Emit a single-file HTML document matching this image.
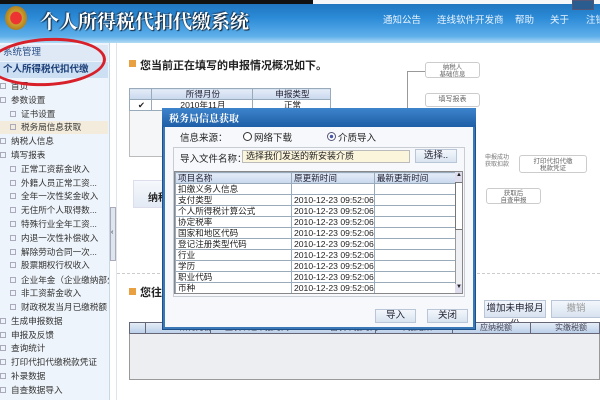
<!DOCTYPE html>
<html><head><meta charset="utf-8"><style>
*{margin:0;padding:0;box-sizing:border-box}
body{width:600px;height:400px;overflow:hidden;position:relative;background:#fff;font-family:"Liberation Sans","Noto Sans CJK SC",sans-serif;font-size:10px;color:#222}
.a{position:absolute;white-space:nowrap}
.hdr{left:0;top:0;width:600px;height:43px;background:linear-gradient(180deg,#1d6fb8 0%,#2b8ad6 40%,#5fb0ea 85%,#b3dbf5 100%)}
.side{left:0;top:43px;width:110px;height:357px;background:#eef4fb;border-right:1px solid #c9d6e4;overflow:hidden}
.mi{position:absolute;left:0;font-size:8.6px;color:#333;height:13px;line-height:13px}
.mi i{display:inline-block;width:6px;height:6px;border:1px solid #aab;margin-right:5px;vertical-align:0}
table{border-collapse:collapse}
.dt td{border:1px solid #9ab;height:10.7px;line-height:10px;font-size:8.6px;padding-left:2px;background:#fff}
.dt tr.h td{background:linear-gradient(#e4ecf7,#c9d8ee);color:#223}
.btn{position:absolute;background:linear-gradient(#f3f7fc,#d8e3f0);border:1px solid #b8c6d8;font-size:9.5px;text-align:center;color:#223}
</style></head><body>
<div class="a hdr"></div>
<div class="a" style="left:0;top:0;width:313px;height:4px;background:#111"></div>
<div class="a" style="left:313px;top:0;width:287px;height:4px;background:#f4f6f8"></div>
<div class="a" style="left:5px;top:6px;width:22px;height:24px;border-radius:50%;background:radial-gradient(#e33 35%,#c9a030 40%,#b28020 70%)"></div>
<div class="a" style="left:40px;top:7px;font-family:'Noto Serif CJK SC',serif;font-size:19px;font-weight:bold;color:#fff;text-shadow:1px 1px 1px #123,-1px -1px 1px #246">个人所得税代扣代缴系统</div>
<div class="a" style="left:383px;top:12px;color:#eaf4ff;font-size:9.5px">通知公告</div>
<div class="a" style="left:437px;top:12px;color:#eaf4ff;font-size:9.5px">连线软件开发商</div>
<div class="a" style="left:515px;top:12px;color:#eaf4ff;font-size:9.5px">帮助</div>
<div class="a" style="left:550px;top:12px;color:#eaf4ff;font-size:9.5px">关于</div>
<div class="a" style="left:586px;top:12px;color:#eaf4ff;font-size:9.5px">注销</div>
<div class="a" style="left:572px;top:0;width:22px;height:10px;background:#2a5c90;border:1px solid #557"></div>

<div class="a side">
<div class="a" style="left:0;top:2px;width:108px;height:16px;background:#dfe9f5;color:#2a4f86;font-size:9.5px;line-height:16px;padding-left:3px">系统管理</div>
<div class="a" style="left:0;top:19px;width:108px;height:16px;background:#cddff2;color:#1c3f78;font-size:9.5px;font-weight:bold;line-height:16px;padding-left:3px">个人所得税代扣代缴</div>
<div class="mi" style="top:37px"><i></i>首页</div>
<div class="mi" style="top:51px"><i></i>参数设置</div>
<div class="mi" style="top:65px;left:10px"><i></i>证书设置</div>
<div class="mi" style="top:78px;width:108px;background:#f3ecdc;padding-left:10px"><i></i>税务局信息获取</div>
<div class="mi" style="top:92px"><i></i>纳税人信息</div>
<div class="mi" style="top:106px"><i></i>填写报表</div>
<div class="mi" style="top:120px;left:10px"><i></i>正常工资薪金收入</div>
<div class="mi" style="top:134px;left:10px"><i></i>外籍人员正常工资...</div>
<div class="mi" style="top:147px;left:10px"><i></i>全年一次性奖金收入</div>
<div class="mi" style="top:161px;left:10px"><i></i>无住所个人取得数...</div>
<div class="mi" style="top:175px;left:10px"><i></i>特殊行业全年工资...</div>
<div class="mi" style="top:189px;left:10px"><i></i>内退一次性补偿收入</div>
<div class="mi" style="top:203px;left:10px"><i></i>解除劳动合同一次...</div>
<div class="mi" style="top:216px;left:10px"><i></i>股票期权行权收入</div>
<div class="mi" style="top:231px;left:10px"><i></i>企业年金（企业缴纳部分）</div>
<div class="mi" style="top:244px;left:10px"><i></i>非工资薪金收入</div>
<div class="mi" style="top:258px;left:10px"><i></i>财政税发当月已缴税额</div>
<div class="mi" style="top:272px"><i></i>生成申报数据</div>
<div class="mi" style="top:286px"><i></i>申报及反馈</div>
<div class="mi" style="top:299px"><i></i>查询统计</div>
<div class="mi" style="top:313px"><i></i>打印代扣代缴税款凭证</div>
<div class="mi" style="top:327px"><i></i>补录数据</div>
<div class="mi" style="top:341px"><i></i>自查数据导入</div>
</div>
<div class="a" style="left:110px;top:207px;width:6px;height:54px;background:#dde5ee;border:1px solid #aab;font-size:7px;line-height:50px">‹</div>
<div class="a" style="left:116px;top:43px;width:1px;height:357px;background:#dde4ec"></div>

<div class="a" style="left:-12px;top:38px;width:118px;height:48px;border:3px solid #d8202a;border-radius:50%;transform:rotate(-3deg)"></div>

<div class="a" style="left:129px;top:60px;width:7px;height:7px;background:#e8a040"></div>
<div class="a" style="left:140px;top:57px;font-size:11px;font-weight:bold">您当前正在填写的申报情况概况如下。</div>
<div class="a" style="left:129px;top:88px;width:202px;height:69px;border:1px solid #bbb;background:#f5f6f8"></div>
<table class="a dt" style="left:129px;top:88px;width:202px"><tr class="h"><td style="width:22px"></td><td style="text-align:center">所得月份</td><td style="text-align:center">申报类型</td></tr><tr><td style="text-align:center">✔</td><td style="text-align:center">2010年11月</td><td style="text-align:center">正常</td></tr></table>
<div class="a" style="left:133px;top:180px;width:32px;height:28px;background:linear-gradient(#f5f8fc,#e3eaf4);border:1px solid #dde;font-size:10px;font-weight:bold;padding:8px 0 0 14px">纳税</div>

<div class="a" style="left:407px;top:71px;width:1px;height:40px;background:#999"></div>
<div class="a" style="left:407px;top:71px;width:18px;height:1px;background:#999"></div>
<div class="a" style="left:425px;top:62px;width:55px;height:16px;border:1px solid #ccc;border-radius:3px;font-size:6.5px;color:#666;text-align:center;line-height:7px;padding-top:1px">纳税人<br>基础信息</div>
<div class="a" style="left:425px;top:93px;width:55px;height:14px;border:1px solid #ccc;border-radius:3px;font-size:7px;color:#666;text-align:center;line-height:12px">填写报表</div>
<div class="a" style="left:485px;top:155px;font-size:6px;color:#777;line-height:7px">申报成功<br>获取扣款</div>
<div class="a" style="left:519px;top:155px;width:68px;height:18px;border:1px solid #ccc;border-radius:3px;font-size:6.5px;color:#666;text-align:center;line-height:7px;padding-top:2px">打印代扣代缴<br>税款凭证</div>
<div class="a" style="left:486px;top:188px;width:55px;height:16px;border:1px solid #ccc;border-radius:3px;font-size:6.5px;color:#666;text-align:center;line-height:7px;padding-top:1px">获取后<br>自查申报</div>

<div class="a" style="left:117px;top:273px;width:483px;border-top:1px dashed #ccc"></div>
<div class="a" style="left:129px;top:288px;width:7px;height:7px;background:#e8a040"></div>
<div class="a" style="left:140px;top:284px;font-size:11px;font-weight:bold">您往</div>
<div class="btn" style="left:484px;top:300px;width:62px;height:18px;line-height:16px">增加未申报月份</div>
<div class="btn" style="left:551px;top:300px;width:50px;height:18px;line-height:16px;color:#999">撤销</div>
<div class="a" style="left:129px;top:322px;width:471px;height:58px;background:#eceef1;border:1px solid #999"></div>
<div class="a" style="left:129px;top:322px;width:471px;height:12px;background:linear-gradient(#e4ecf7,#bcd0ea);border:1px solid #667;font-size:8px;color:#445;line-height:10px">
<span class="a" style="left:15px;height:10px;border-left:1px solid #667"></span>
<span class="a" style="left:50px">所得月份</span><span class="a" style="left:80px;height:10px;border-left:1px solid #667"></span><span class="a" style="left:95px">上次以通申报时间</span><span class="a" style="left:200px">首次申报时间</span><span class="a" style="left:245px;height:10px;border-left:1px solid #667"></span><span class="a" style="left:270px">申报结果</span><span class="a" style="left:322px;height:10px;border-left:1px solid #667"></span><span class="a" style="left:350px">应纳税额</span><span class="a" style="left:400px;height:10px;border-left:1px solid #667"></span><span class="a" style="left:425px">实缴税额</span></div>

<div class="a" style="left:162px;top:108px;width:314px;height:222px;background:#3a78b8;border:1px solid #1d4f88"></div>
<div class="a" style="left:162px;top:108px;width:314px;height:19px;background:linear-gradient(#3d84cc,#1e5ea6);color:#fff;font-size:10px;font-weight:bold;line-height:19px;padding-left:7px;font-family:'Noto Serif CJK SC',serif">税务局信息获取</div>
<div class="a" style="left:165px;top:127px;width:308px;height:200px;background:#f6f8fb"></div>
<div class="a" style="left:180px;top:130px;font-size:9.5px">信息来源：</div>
<div class="a" style="left:243px;top:132px;width:9px;height:9px;border:1px solid #333;border-radius:50%;background:#fff"></div>
<div class="a" style="left:254px;top:130px;font-size:9.5px">网络下载</div>
<div class="a" style="left:327px;top:132px;width:9px;height:9px;border:1px solid #557;border-radius:50%;background:radial-gradient(#45a 30%,#fff 40%)"></div>
<div class="a" style="left:338px;top:130px;font-size:9.5px">介质导入</div>
<div class="a" style="left:173px;top:147px;width:292px;height:150px;border:1px solid #c8cdd4"></div>
<div class="a" style="left:180px;top:151px;font-size:9.5px">导入文件名称：</div>
<div class="a" style="left:242px;top:150px;width:168px;height:13px;background:#fbf5dc;border:1px solid #bbb;font-size:9px;padding-left:3px;line-height:11px">选择我们发送的新安装介质</div>
<div class="btn" style="left:415px;top:149px;width:42px;height:14px;line-height:12px">选择..</div>
<div class="a" style="left:174px;top:171px;width:289px;height:123px;overflow:hidden;border:1px solid #888;background:#fff">
<table class="dt" style="width:281px">
<tr class="h"><td style="width:116px">项目名称</td><td style="width:80px">原更新时间</td><td>最新更新时间</td></tr>
<tr><td>扣缴义务人信息</td><td></td><td></td></tr>
<tr><td>支付类型</td><td>2010-12-23 09:52:06</td><td></td></tr>
<tr><td>个人所得税计算公式</td><td>2010-12-23 09:52:06</td><td></td></tr>
<tr><td>协定税率</td><td>2010-12-23 09:52:06</td><td></td></tr>
<tr><td>国家和地区代码</td><td>2010-12-23 09:52:06</td><td></td></tr>
<tr><td>登记注册类型代码</td><td>2010-12-23 09:52:06</td><td></td></tr>
<tr><td>行业</td><td>2010-12-23 09:52:06</td><td></td></tr>
<tr><td>学历</td><td>2010-12-23 09:52:06</td><td></td></tr>
<tr><td>职业代码</td><td>2010-12-23 09:52:06</td><td></td></tr>
<tr><td>币种</td><td>2010-12-23 09:52:06</td><td></td></tr>
<tr><td>综合参数</td><td>2010-12-23 09:52:06</td><td></td></tr>
</table>
<div class="a" style="left:280px;top:0;width:8px;height:122px;background:#eef0f3;border-left:1px solid #999"></div>
<div class="a" style="left:280px;top:0;width:8px;height:10px;background:#dde;font-size:6px;text-align:center">▲</div>
<div class="a" style="left:280px;top:10px;width:8px;height:48px;background:#fff;border:1px solid #777"></div>
<div class="a" style="left:280px;top:112px;width:8px;height:10px;background:#dde;font-size:6px;text-align:center">▼</div>
</div>
<div class="btn" style="left:375px;top:309px;width:41px;height:14px;line-height:12px">导入</div>
<div class="btn" style="left:427px;top:309px;width:41px;height:14px;line-height:12px">关闭</div>
</body></html>
